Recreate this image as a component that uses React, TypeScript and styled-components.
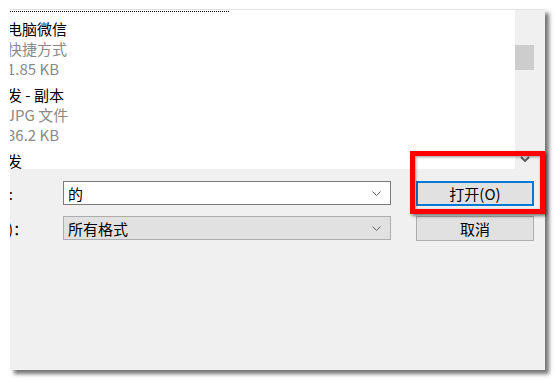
import React from 'react';
import styled, { createGlobalStyle } from 'styled-components';

const GlobalStyle = createGlobalStyle`
  html, body {
    margin: 0;
    padding: 0;
    background: #ffffff;
  }
  body {
    font-family: "Noto Sans CJK SC", "Noto Sans", sans-serif;
  }
`;

const Page = styled.div`
  width: 557px;
  height: 381px;
  padding: 9px 0 0 10px;
  box-sizing: border-box;
`;

const Dialog = styled.div`
  position: relative;
  width: 535px;
  height: 361px;
  background: #f0f0f0;
  border-top: 1px solid #e3e3e3;
  box-sizing: border-box;
  box-shadow: 4px 4px 4px rgba(0, 0, 0, 0.55);
  display: flex;
  flex-direction: column;
`;

const ListPane = styled.div`
  height: 159px;
  display: flex;
  padding-right: 11px;
`;

const FileList = styled.div`
  flex: 1;
  background: #ffffff;
  overflow: hidden;
  padding-top: 1px;
  display: flex;
  flex-direction: column;
  gap: 6px;
`;

const FocusEdge = styled.div`
  width: 219px;
  border-top: 1px dotted #000;
  margin-bottom: 1px;
`;

const Item = styled.div`
  margin-left: -3px;
  display: flex;
  flex-direction: column;
`;

const Line = styled.div<{ $muted?: boolean }>`
  height: 20px;
  line-height: 20px;
  font-size: 15px;
  white-space: nowrap;
  color: ${(p) => (p.$muted ? '#8a8a8a' : '#000000')};
`;

const ScrollBar = styled.div`
  width: 19px;
  background: #f0f0f0;
  display: flex;
  flex-direction: column;
`;

const Thumb = styled.div`
  margin-top: 35px;
  height: 25px;
  background: #cdcdcd;
`;

const ArrowButton = styled.div`
  margin-top: auto;
  height: 20px;
  display: flex;
  align-items: flex-start;
  justify-content: center;
  padding-top: 7px;
  box-sizing: border-box;
`;

const Controls = styled.div`
  flex: 1;
  padding: 12px 11px 0 0;
  display: flex;
  flex-direction: column;
  gap: 11px;
`;

const Row = styled.div`
  display: flex;
  align-items: center;
  height: 24px;
`;

const Label = styled.div<{ $width: number }>`
  width: ${(p) => p.$width}px;
  margin-right: ${(p) => 53 - p.$width}px;
  overflow: hidden;
  display: flex;
  justify-content: flex-end;
  white-space: nowrap;
  font-size: 15px;
  color: #000;
`;

const Combo = styled.div<{ $editable?: boolean }>`
  width: 328px;
  height: 24px;
  box-sizing: border-box;
  border: 1px solid ${(p) => (p.$editable ? '#7a7a7a' : '#adadad')};
  background: ${(p) => (p.$editable ? '#ffffff' : '#e1e1e1')};
  display: flex;
  align-items: center;
  padding: 0 9px 0 4px;
  font-size: 15px;
  color: #000;
`;

const ComboText = styled.span`
  flex: 1;
`;

const Button = styled.div<{ $default?: boolean }>`
  margin-left: 25px;
  width: 118px;
  height: 25px;
  box-sizing: border-box;
  border: ${(p) => (p.$default ? '2px solid #0078d7' : '1px solid #adadad')};
  background: #e1e1e1;
  display: flex;
  align-items: center;
  justify-content: center;
  font-size: 15px;
  color: #000;
`;

const Highlight = styled.div`
  position: absolute;
  left: 400px;
  top: 141px;
  width: 135px;
  height: 63px;
  box-sizing: border-box;
  border: 5px solid #ff0000;
  box-shadow: 2px 2px 3px rgba(0, 0, 0, 0.5), inset 1px 1px 3px rgba(0, 0, 0, 0.4);
  pointer-events: none;
`;

const Chevron = ({ color, bold }: { color: string; bold?: boolean }) =>
  bold ? (
    <svg width="10" height="6" viewBox="0 0 10 6">
      <polyline points="1,1 5,5 9,1" fill="none" stroke={color} strokeWidth={2} />
    </svg>
  ) : (
    <svg width="9" height="5" viewBox="0 0 9 5">
      <polyline points="0.5,0.5 4.5,4.5 8.5,0.5" fill="none" stroke={color} strokeWidth={1} />
    </svg>
  );

const files = [
  { name: '电脑微信', type: '快捷方式', size: '1.85 KB' },
  { name: '发 - 副本', type: 'JPG 文件', size: '36.2 KB' },
  { name: '发' },
];

export default function App() {
  return (
    <>
      <GlobalStyle />
      <Page>
        <Dialog>
          <ListPane>
            <FileList>
              <FocusEdge />
              {files.map((f) => (
                <Item key={f.name}>
                  <Line>{f.name}</Line>
                  {f.type && <Line $muted>{f.type}</Line>}
                  {f.size && <Line $muted>{f.size}</Line>}
                </Item>
              ))}
            </FileList>
            <ScrollBar>
              <Thumb />
              <ArrowButton>
                <Chevron color="#5a5a5a" bold />
              </ArrowButton>
            </ScrollBar>
          </ListPane>
          <Controls>
            <Row>
              <Label $width={3}>文件名(N):</Label>
              <Combo $editable>
                <ComboText>的</ComboText>
                <Chevron color="#606060" />
              </Combo>
              <Button $default>打开(O)</Button>
            </Row>
            <Row>
              <Label $width={18}>文件类型(T)：</Label>
              <Combo>
                <ComboText>所有格式</ComboText>
                <Chevron color="#606060" />
              </Combo>
              <Button>取消</Button>
            </Row>
          </Controls>
          <Highlight />
        </Dialog>
      </Page>
    </>
  );
}
